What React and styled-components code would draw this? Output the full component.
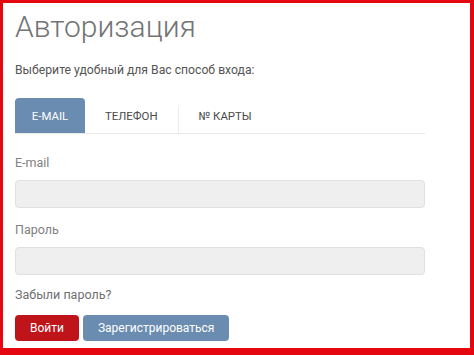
import React, { useState } from "react"
import styled, { createGlobalStyle } from "styled-components"

const GlobalStyle = createGlobalStyle`
  html, body {
    margin: 0;
    padding: 0;
    background: #fff;
  }
  body {
    font-family: Roboto, "Liberation Sans", sans-serif;
  }
`

const tabs = ["E-MAIL", "ТЕЛЕФОН", "№ КАРТЫ"]

const App = () => {
  const [active, setActive] = useState(0)

  return (
    <>
      <GlobalStyle />
      <Frame>
        <Title>Авторизация</Title>
        <Lead>Выберите удобный для Вас способ входа:</Lead>

        <TabBar>
          {tabs.map((t, i) => (
            <Tab
              key={t}
              active={i === active}
              divider={i === 2}
              onClick={() => setActive(i)}
            >
              {t}
            </Tab>
          ))}
        </TabBar>

        <Field first>
          <Label>E-mail</Label>
          <Input type="text" />
        </Field>
        <Field>
          <Label>Пароль</Label>
          <Input type="password" />
        </Field>

        <Forgot>Забыли пароль?</Forgot>

        <Buttons>
          <Button variant="red">Войти</Button>
          <Button>Зарегистрироваться</Button>
        </Buttons>
      </Frame>
    </>
  )
}

export default App

const Frame = styled.div`
  box-sizing: border-box;
  width: 474px;
  height: 355px;
  border: solid #e4070f;
  border-width: 3px 4px 7px 3px;
  padding: 6px 45px 0 12px;
  background: #fff;
  display: flex;
  flex-direction: column;
`

const Title = styled.h1`
  margin: 0;
  font-size: 30px;
  font-weight: 300;
  line-height: 36px;
  color: #737373;
`

const Lead = styled.p`
  margin: 17px 0 0;
  font-size: 12.2px;
  line-height: 16px;
  color: #555;
`

const TabBar = styled.div`
  display: flex;
  margin-top: 20px;
  height: 35px;
  border-bottom: 1px solid #e8e8e8;
`

const Tab = styled.div`
  display: flex;
  align-items: center;
  justify-content: center;
  box-sizing: border-box;
  width: ${({ active }) => (active ? "70px" : "auto")};
  padding: 0 ${({ active }) => (active ? "0" : "20px")};
  font-size: 11.4px;
  color: ${({ active }) => (active ? "#fff" : "#4a4a4a")};
  background: ${({ active }) => (active ? "#6a8cb0" : "transparent")};
  border-radius: 4px 4px 0 0;
  border-left: ${({ divider }) => (divider ? "1px solid #ececec" : "none")};
  margin-top: ${({ divider }) => (divider ? "6px" : "0")};
  padding-bottom: ${({ divider }) => (divider ? "6px" : "0")};
  cursor: pointer;
`

const Field = styled.div`
  display: flex;
  flex-direction: column;
  margin-top: ${({ first }) => (first ? "21px" : "14px")};
`

const Label = styled.label`
  font-size: 12.5px;
  line-height: 16px;
  color: #808080;
`

const Input = styled.input`
  box-sizing: border-box;
  margin-top: 9px;
  height: 28px;
  width: 410px;
  border: 1px solid #e0e0e0;
  border-radius: 4px;
  background: #efefef;
  outline: none;
`

const Forgot = styled.div`
  margin-top: 12px;
  font-size: 12.5px;
  line-height: 16px;
  color: #707070;
`

const Buttons = styled.div`
  display: flex;
  gap: 4px;
  margin-top: 12px;
`

const Button = styled.button`
  height: 26px;
  padding: 0 15px;
  border: none;
  border-radius: 4px;
  font-family: Roboto, "Liberation Sans", sans-serif;
  font-size: 12px;
  color: #fff;
  background: ${({ variant }) => (variant === "red" ? "#c0141b" : "#6a8cb0")};
  cursor: pointer;
`
